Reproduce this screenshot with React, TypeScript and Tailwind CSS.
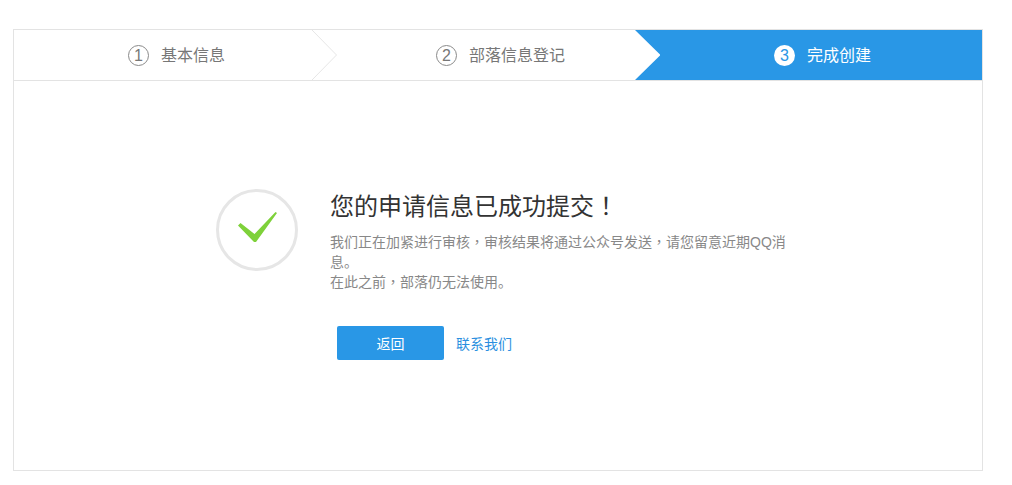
const font = '[font-family:"Liberation_Sans","Noto_Sans_CJK_SC",sans-serif]';
// centered full-width punctuation, as in the original
const punct = 'leading-none [font-family:"Noto_Sans_CJK_TC",sans-serif]';

function StepNumber({ n, active }: { n: number; active?: boolean }) {
  return (
    <span
      className={`flex h-[21px] w-[21px] items-center justify-center rounded-full text-[16px] leading-none ${
        active ? 'bg-white text-[#2997e6]' : 'border border-[#8a8a8a] text-[#777]'
      }`}
    >
      {n}
    </span>
  );
}

export default function App() {
  return (
    <div className={`h-[485px] w-[1012px] overflow-hidden bg-white pl-[13px] pt-[29px] ${font}`}>
      <div className="flex h-[442px] w-[970px] flex-col border border-[#e3e3e3]">
        {/* Steps */}
        <div className="flex h-[51px] border-b border-[#e3e3e3] text-[16px]">
          <div className="relative flex flex-1 items-center justify-center gap-[12px] pl-[3px] pt-[1px] text-[#777]">
            <StepNumber n={1} />
            <span>基本信息</span>
            <svg className="absolute right-[-2px] top-0" width="27" height="50" viewBox="0 0 27 50">
              <path d="M1 0 L25.5 25 L1 50" fill="none" stroke="#e6e6e6" />
            </svg>
          </div>
          <div className="flex flex-1 items-center justify-center gap-[12px] pl-[5px] pt-[1px] text-[#777]">
            <StepNumber n={2} />
            <span>部落信息登记</span>
          </div>
          <div className="relative flex flex-1 items-center justify-center gap-[12px] bg-[#2997e6] pl-[3px] pt-[1px] text-white">
            <svg className="absolute left-[-25.5px] top-0" width="27" height="50" viewBox="0 0 27 50">
              <path d="M0 0 H27 V50 H0 L25.5 25 Z" fill="#2997e6" />
            </svg>
            <StepNumber n={3} active />
            <span>完成创建</span>
          </div>
        </div>

        {/* Result */}
        <div className="flex gap-[32px] pl-[202px] pt-[108px]">
          <div className="flex h-[82px] w-[82px] shrink-0 items-center justify-center rounded-full border-[3px] border-[#e6e6e6]">
            <svg className="mb-[6px]" width="40" height="31" viewBox="0 0 40 31">
              <path d="M1 13.5 L3.5 11 L17.5 22 L38.5 0 L40 1 L19 30 L17 30 Z" fill="#7ed13a" />
            </svg>
          </div>
          <div>
            <h1 className="text-[24px] font-normal leading-[36px] text-[#333]">
              您的申请信息已成功提交<span className={punct}>！</span>
            </h1>
            <p className="mt-[7px] w-[460px] text-[14px] leading-[20px] text-[#888]">
              我们正在加紧进行审核<span className={punct}>，</span>审核结果将通过公众号发送<span className={punct}>，</span>请您留意近期QQ消息。
              <br />
              在此之前<span className={punct}>，</span>部落仍无法使用。
            </p>
            <div className="ml-[7px] mt-[34px] flex items-center gap-[12px]">
              <button className="h-[34px] w-[107px] rounded-[2px] bg-[#2997e6] pt-[2px] text-[14px] text-white">
                返回
              </button>
              <a className="pt-[2px] text-[14px] text-[#2b8fe0]">联系我们</a>
            </div>
          </div>
        </div>
      </div>
    </div>
  );
}
